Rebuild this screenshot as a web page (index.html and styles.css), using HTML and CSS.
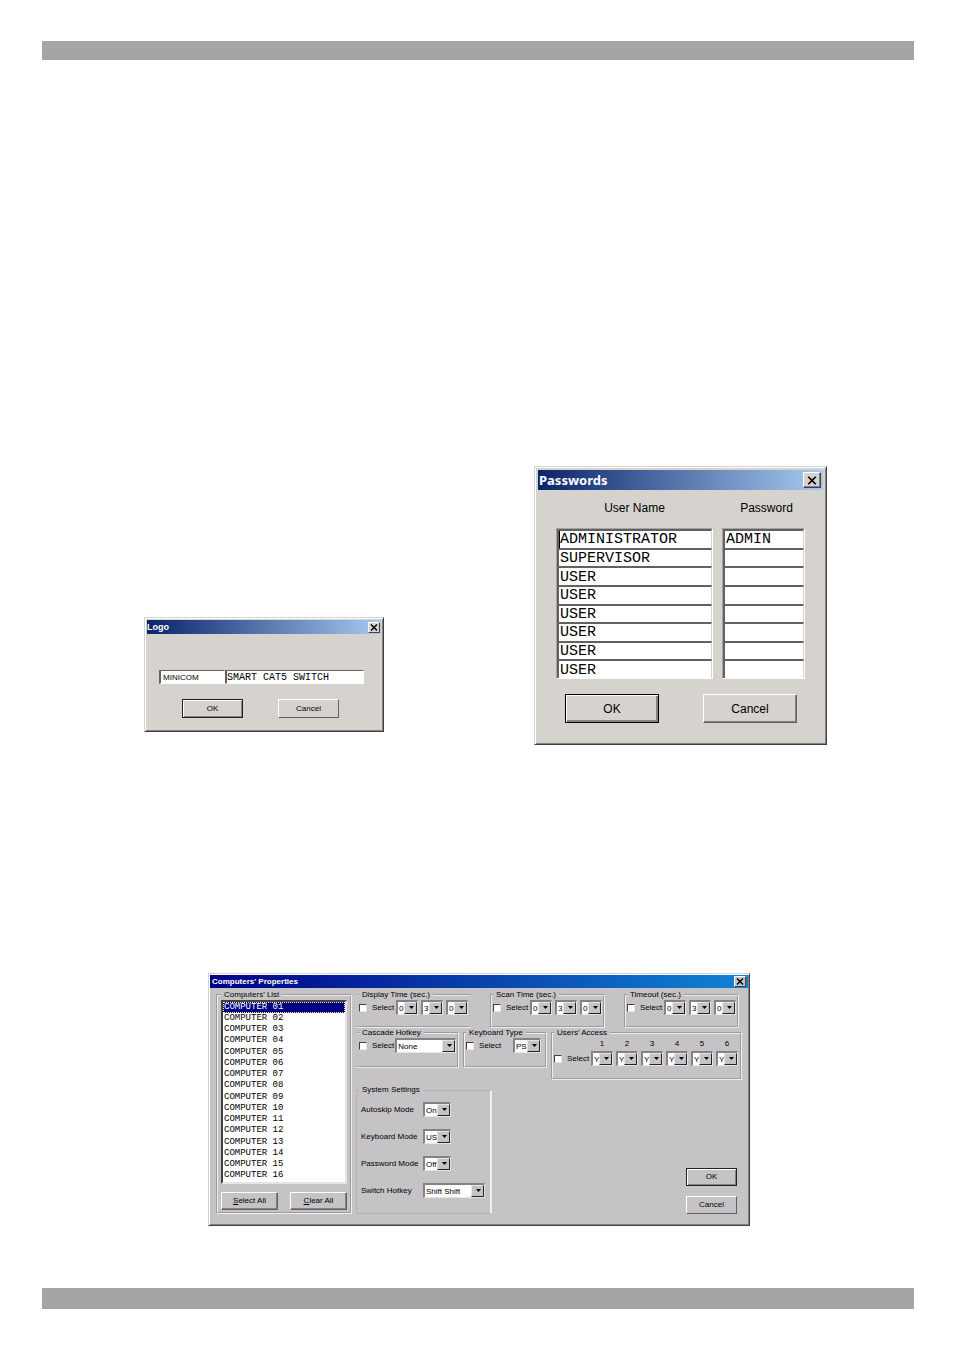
FILE: index.html
```html
<!DOCTYPE html>
<html lang="en">
<head>
    <meta charset="UTF-8">
    <meta name="viewport" content="width=device-width, initial-scale=1.0">
    <title>Switch configuration dialogs</title>
    <link rel="stylesheet" href="styles.css">
</head>
<body>
    <header class="bar"></header>

    <main>
        <div class="dialog-row">
            <!-- Logo dialog -->
            <section class="window logo-window">
                <div class="titlebar">
                    <span class="title">Logo</span>
                    <button class="close" aria-label="Close"><svg viewBox="0 0 8 7"><path d="M1 0.5L7 6.5M7 0.5L1 6.5"/></svg></button>
                </div>
                <div class="logo-fields">
                    <input class="brand" type="text" value="MINICOM" aria-label="Brand">
                    <input class="model" type="text" value="SMART CAT5 SWITCH" aria-label="Model">
                </div>
                <div class="actions">
                    <button class="btn default">OK</button>
                    <button class="btn">Cancel</button>
                </div>
            </section>

            <!-- Passwords dialog -->
            <section class="window passwords-window">
                <div class="titlebar">
                    <span class="title">Passwords</span>
                    <button class="close" aria-label="Close"><svg viewBox="0 0 8 7"><path d="M1 0.5L7 6.5M7 0.5L1 6.5"/></svg></button>
                </div>
                <div class="accounts">
                    <div class="account-column">
                        <h2>User Name</h2>
                        <div class="fields">
                            <input class="caret" type="text" value="ADMINISTRATOR" aria-label="User name 1">
                            <input type="text" value="SUPERVISOR" aria-label="User name 2">
                            <input type="text" value="USER" aria-label="User name 3">
                            <input type="text" value="USER" aria-label="User name 4">
                            <input type="text" value="USER" aria-label="User name 5">
                            <input type="text" value="USER" aria-label="User name 6">
                            <input type="text" value="USER" aria-label="User name 7">
                            <input type="text" value="USER" aria-label="User name 8">
                        </div>
                    </div>
                    <div class="account-column">
                        <h2>Password</h2>
                        <div class="fields">
                            <input type="text" value="ADMIN" aria-label="Password 1">
                            <input type="text" aria-label="Password 2">
                            <input type="text" aria-label="Password 3">
                            <input type="text" aria-label="Password 4">
                            <input type="text" aria-label="Password 5">
                            <input type="text" aria-label="Password 6">
                            <input type="text" aria-label="Password 7">
                            <input type="text" aria-label="Password 8">
                        </div>
                    </div>
                </div>
                <div class="actions">
                    <button class="btn default">OK</button>
                    <button class="btn">Cancel</button>
                </div>
            </section>
        </div>

        <!-- Computers' Properties dialog -->
        <section class="window properties-window">
            <div class="titlebar">
                <span class="title">Computers' Properties</span>
                <button class="close" aria-label="Close"><svg viewBox="0 0 8 7"><path d="M1 0.5L7 6.5M7 0.5L1 6.5"/></svg></button>
            </div>
            <div class="properties">
                <fieldset class="group list-group">
                    <legend>Computers' List</legend>
                    <select class="computers" multiple size="16" aria-label="Computers' List">
                        <option selected>COMPUTER 01</option>
                        <option>COMPUTER 02</option>
                        <option>COMPUTER 03</option>
                        <option>COMPUTER 04</option>
                        <option>COMPUTER 05</option>
                        <option>COMPUTER 06</option>
                        <option>COMPUTER 07</option>
                        <option>COMPUTER 08</option>
                        <option>COMPUTER 09</option>
                        <option>COMPUTER 10</option>
                        <option>COMPUTER 11</option>
                        <option>COMPUTER 12</option>
                        <option>COMPUTER 13</option>
                        <option>COMPUTER 14</option>
                        <option>COMPUTER 15</option>
                        <option>COMPUTER 16</option>
                    </select>
                    <div class="list-actions">
                        <button class="btn"><u>S</u>elect All</button>
                        <button class="btn"><u>C</u>lear All</button>
                    </div>
                </fieldset>

                <div class="settings">
                    <div class="times">
                        <fieldset class="group open">
                            <legend>Display Time (sec.)</legend>
                            <div class="line">
                                <label class="check"><input type="checkbox">Select</label>
                                <span class="combos">
                                    <span class="combo"><select aria-label="Display time hundreds"><option>0</option></select></span>
                                    <span class="combo"><select aria-label="Display time tens"><option>3</option></select></span>
                                    <span class="combo"><select aria-label="Display time units"><option>0</option></select></span>
                                </span>
                            </div>
                        </fieldset>
                        <fieldset class="group">
                            <legend>Scan Time (sec.)</legend>
                            <div class="line">
                                <label class="check"><input type="checkbox">Select</label>
                                <span class="combos">
                                    <span class="combo"><select aria-label="Scan time hundreds"><option>0</option></select></span>
                                    <span class="combo"><select aria-label="Scan time tens"><option>3</option></select></span>
                                    <span class="combo"><select aria-label="Scan time units"><option>0</option></select></span>
                                </span>
                            </div>
                        </fieldset>
                        <fieldset class="group">
                            <legend>Timeout (sec.)</legend>
                            <div class="line">
                                <label class="check"><input type="checkbox">Select</label>
                                <span class="combos">
                                    <span class="combo"><select aria-label="Timeout hundreds"><option>0</option></select></span>
                                    <span class="combo"><select aria-label="Timeout tens"><option>3</option></select></span>
                                    <span class="combo"><select aria-label="Timeout units"><option>0</option></select></span>
                                </span>
                            </div>
                        </fieldset>
                    </div>

                    <div class="options">
                        <fieldset class="group cascade open-left">
                            <legend>Cascade Hotkey</legend>
                            <div class="line">
                                <label class="check"><input type="checkbox">Select</label>
                                <span class="combo wide"><select aria-label="Cascade hotkey"><option>None</option></select></span>
                            </div>
                        </fieldset>
                        <fieldset class="group keyboard">
                            <legend>Keyboard Type</legend>
                            <div class="line">
                                <label class="check"><input type="checkbox">Select</label>
                                <span class="combo medium"><select aria-label="Keyboard type"><option>PS</option></select></span>
                            </div>
                        </fieldset>
                        <fieldset class="group access">
                            <legend>Users' Access</legend>
                            <div class="line">
                                <label class="check"><input type="checkbox">Select</label>
                                <span class="combos">
                                    <label class="user">1<span class="combo"><select><option>Y</option></select></span></label>
                                    <label class="user">2<span class="combo"><select><option>Y</option></select></span></label>
                                    <label class="user">3<span class="combo"><select><option>Y</option></select></span></label>
                                    <label class="user">4<span class="combo"><select><option>Y</option></select></span></label>
                                    <label class="user">5<span class="combo"><select><option>Y</option></select></span></label>
                                    <label class="user">6<span class="combo"><select><option>Y</option></select></span></label>
                                </span>
                            </div>
                        </fieldset>
                    </div>

                    <div class="bottom">
                        <fieldset class="group system">
                            <legend>System Settings</legend>
                            <div class="system-grid">
                                <label for="autoskip">Autoskip Mode</label>
                                <span class="combo medium"><select id="autoskip"><option>On</option></select></span>
                                <label for="keyboard-mode">Keyboard Mode</label>
                                <span class="combo medium"><select id="keyboard-mode"><option>US</option></select></span>
                                <label for="password-mode">Password Mode</label>
                                <span class="combo medium"><select id="password-mode"><option>Off</option></select></span>
                                <label for="switch-hotkey">Switch Hotkey</label>
                                <span class="combo wide"><select id="switch-hotkey"><option>Shift Shift</option></select></span>
                            </div>
                        </fieldset>
                        <div class="side-actions">
                            <button class="btn default">OK</button>
                            <button class="btn">Cancel</button>
                        </div>
                    </div>
                </div>
            </div>
        </section>
    </main>

    <footer class="bar footer-bar"></footer>
</body>
</html>
```
FILE: styles.css
```css
* {
    box-sizing: border-box;
}

body {
    margin: 0;
    padding: 41px 40px 46px 42px;
    background: #fff;
    color: #000;
    font-family: "Liberation Sans", Arial, sans-serif;
    font-size: 8px;
    line-height: 10px;
}

input,
select,
button {
    margin: 0;
    font-family: inherit;
    font-size: inherit;
    line-height: inherit;
    color: inherit;
    border-radius: 0;
    outline: none;
}

.bar {
    height: 19px;
    background: #a5a5a5;
}

.footer-bar {
    height: 21px;
    margin-top: 62px;
}

.dialog-row {
    display: flex;
    align-items: flex-end;
    gap: 150px;
    margin: 406px 0 228px;
    padding-left: 102px;
}

/* Windows */
.window {
    max-width: 100%;
    padding: 2px;
    background: #d6d3ce;
    border: 1px solid;
    border-color: #d6d3ce #42413f #42413f #d6d3ce;
    box-shadow: inset 1px 1px #fff, inset -1px -1px #848284;
}

.titlebar {
    display: flex;
    align-items: center;
    justify-content: space-between;
    height: 14px;
    padding: 0 1px 0 0;
    background: linear-gradient(to right, #0a246a, #a6caf0);
}

.title {
    color: #fff;
    font-weight: bold;
}

.close {
    display: flex;
    align-items: center;
    justify-content: center;
    width: 12px;
    height: 11px;
    padding: 0;
    background: #d6d3ce;
    border: 1px solid;
    border-color: #fff #42413f #42413f #fff;
}

.close svg {
    width: 8px;
    height: 7px;
    fill: none;
    stroke: #000;
    stroke-width: 1.4;
}

/* Buttons */
.btn {
    width: 61px;
    height: 19px;
    padding: 0;
    text-align: center;
    background: #d6d3ce;
    border: 1px solid;
    border-color: #fff #63615f #63615f #fff;
}

.btn.default {
    border-color: #222;
    box-shadow: inset 1px 1px #fff, inset -1px -1px #848284;
}

.actions {
    display: flex;
    gap: 35px;
}

/* Logo */
.logo-window {
    width: 240px;
    height: 115px;
    margin-bottom: 13px;
}

.logo-window .titlebar {
    margin-bottom: 36px;
}

.logo-window .title {
    font-size: 9px;
}

.logo-fields {
    display: flex;
    padding: 0 17px 0 12px;
}

.logo-fields input {
    height: 14px;
    min-width: 0;
    padding: 0 2px;
    background: #fff;
    border: solid;
    border-width: 1px 1px 1px 2px;
    border-color: #63615f #fff #fff #63615f;
}

.logo-fields .brand {
    flex: 0 0 66px;
}

.logo-fields .model {
    flex: 1;
    padding: 0;
    font-family: "Liberation Mono", "Courier New", monospace;
    font-size: 10px;
}

.logo-window .actions {
    padding: 15px 0 0 35px;
}

/* Passwords */
.passwords-window {
    width: 293px;
    height: 279px;
    padding: 3px;
    font-size: 12px;
    line-height: 16px;
}

.passwords-window .titlebar {
    height: 20px;
    padding: 0 2px 0 1px;
}

.passwords-window .title {
    font-family: "Noto Sans", sans-serif;
    font-size: 13px;
}

.passwords-window .close {
    width: 18px;
    height: 16px;
    box-shadow: inset -1px -1px #848284;
}

.passwords-window .close svg {
    width: 10px;
    height: 9px;
}

.accounts {
    display: grid;
    grid-template-columns: 157px 83px;
    gap: 9px;
    padding: 10px 0 0 18px;
}

.accounts h2 {
    margin: 0 0 12px;
    text-align: center;
    font-size: 12px;
    font-weight: normal;
}

.account-column:last-child h2 {
    padding-left: 6px;
}

.fields {
    display: grid;
    grid-template-rows: repeat(8, minmax(0, 1fr));
    height: 151px;
    border: 1px solid;
    border-color: #a5a29f #fff #fff #a5a29f;
}

.fields input {
    width: 100%;
    min-width: 0;
    height: 100%;
    padding: 1px 1px 0;
    background: #fff;
    border: solid;
    border-width: 2px 1px 0 2px;
    border-color: #63615f #d6d3ce #d6d3ce #63615f;
    font-family: "Liberation Mono", "Courier New", monospace;
    font-size: 15px;
    line-height: 15px;
}

.fields .caret {
    background: linear-gradient(#000, #000) 0 0 / 1px 100% no-repeat #fff;
}

.passwords-window .actions {
    gap: 44px;
    padding: 15px 0 0 27px;
}

.passwords-window .btn {
    width: 94px;
    height: 29px;
    box-shadow: inset -1px -1px #848284;
}

.passwords-window .btn.default {
    border-color: #000;
    box-shadow: inset 1px 1px #fff, inset -2px -2px #848284;
}

/* Computers' Properties */
.properties-window {
    width: 542px;
    margin-left: 166px;
    padding: 1px;
    background: #c6c3c6;
}

.properties-window .titlebar {
    height: 13px;
    padding: 0 2px;
    background: linear-gradient(to right, #000084, #1084d6);
}

.properties-window .close,
.properties-window .btn {
    background: #c6c3c6;
}

.properties {
    display: flex;
    gap: 4px;
    padding: 2px 6px 10px;
}

.group {
    min-width: 0;
    margin: 0;
    padding: 0 1px;
    border: 2px groove #efefef;
}

.group.open {
    border-left-color: transparent;
    border-right-color: transparent;
}

.group.open-left {
    border-left-color: transparent;
}

.group legend {
    padding: 0 3px;
}

.list-group {
    flex: 0 0 136px;
    padding: 0 3px;
}

.computers {
    display: block;
    width: 100%;
    height: 184px;
    padding: 0;
    overflow: hidden;
    background: #fff;
    border: 2px solid;
    border-color: #42413f #e7e3e7 #e7e3e7 #42413f;
    font-family: "Liberation Mono", "Courier New", monospace;
    font-size: 9px;
}

.computers option {
    height: 11px;
    min-height: 11px;
    padding: 0 1px;
    line-height: 11px;
}

/* spread the spare pixels of the list over its rows */
.computers option:nth-child(4n) {
    height: 12px;
}

.computers option:checked {
    color: #fff;
    background: linear-gradient(#000084, #000084);
    outline: 1px dotted #ffff7b;
    outline-offset: -1px;
    -webkit-text-fill-color: #fff;
}

.list-actions {
    display: flex;
    justify-content: space-between;
    padding-top: 8px;
}

.list-actions .btn {
    width: 57px;
    height: 18px;
    box-shadow: inset -1px -1px #848284;
}

.settings {
    flex: 1;
    min-width: 0;
}

.times {
    display: flex;
    gap: 19px;
}

.times .group {
    width: 115px;
    height: 38px;
}

.line {
    display: flex;
    align-items: center;
}

.check {
    display: flex;
    align-items: center;
    gap: 5px;
    width: 37px;
    white-space: nowrap;
}

.check input {
    appearance: none;
    flex: none;
    width: 8px;
    height: 8px;
    background: #fff;
    border: 1px solid;
    border-color: #42413f #e7e3e7 #e7e3e7 #42413f;
}

.combos {
    display: flex;
    gap: 3px;
}

.combo {
    position: relative;
    display: block;
    width: 22px;
    height: 15px;
}

.combo select {
    appearance: none;
    display: block;
    width: 100%;
    height: 100%;
    padding: 1px 11px 0 1px;
    overflow: hidden;
    background: #fff;
    border: solid;
    border-width: 2px 1px 1px 2px;
    border-color: #848284 #e7e3e7 #e7e3e7 #848284;
}

/* drop button and its arrow, laid over the select */
.combo::before,
.combo::after {
    content: "";
    position: absolute;
    pointer-events: none;
}

.combo::before {
    top: 2px;
    right: 1px;
    bottom: 1px;
    width: 11px;
    background: #c6c3c6;
    border: 1px solid;
    border-color: #e7e3e7 #222 #222 #e7e3e7;
}

.combo::after {
    top: 6px;
    right: 4px;
    width: 5px;
    height: 3px;
    background: #000;
    clip-path: polygon(0 0, 100% 0, 50% 100%);
}

.combo.medium {
    width: 28px;
}

.combo.wide {
    width: 62px;
}

.options {
    display: flex;
    align-items: flex-start;
    gap: 4px;
}

.options .group {
    height: 40px;
}

.cascade {
    flex: 0 0 103px;
}

.keyboard {
    flex: 0 0 84px;
}

.keyboard .medium {
    margin: 0 3px 0 auto;
}

.options .access {
    flex: 1;
    height: 52px;
}

.access .line {
    align-items: flex-end;
    padding-top: 1px;
}

.access .check {
    height: 15px;
}

.user {
    display: flex;
    flex-direction: column;
    align-items: center;
    gap: 2px;
}

.bottom {
    display: flex;
    align-items: flex-end;
    justify-content: space-between;
    padding: 5px 5px 0 0;
}

.system {
    flex: 0 0 136px;
    height: 129px;
    padding: 0 1px 0 2px;
    border: 1px solid #b5b2b5;
    border-right: 2px solid #efefef;
}

.system-grid {
    display: grid;
    grid-template-columns: 62px 1fr;
    grid-auto-rows: 27px;
    align-items: center;
    padding: 1px 0 0 2px;
    white-space: nowrap;
}

.side-actions {
    display: flex;
    flex-direction: column;
    gap: 10px;
}

.side-actions .btn {
    width: 51px;
    height: 18px;
}
```
